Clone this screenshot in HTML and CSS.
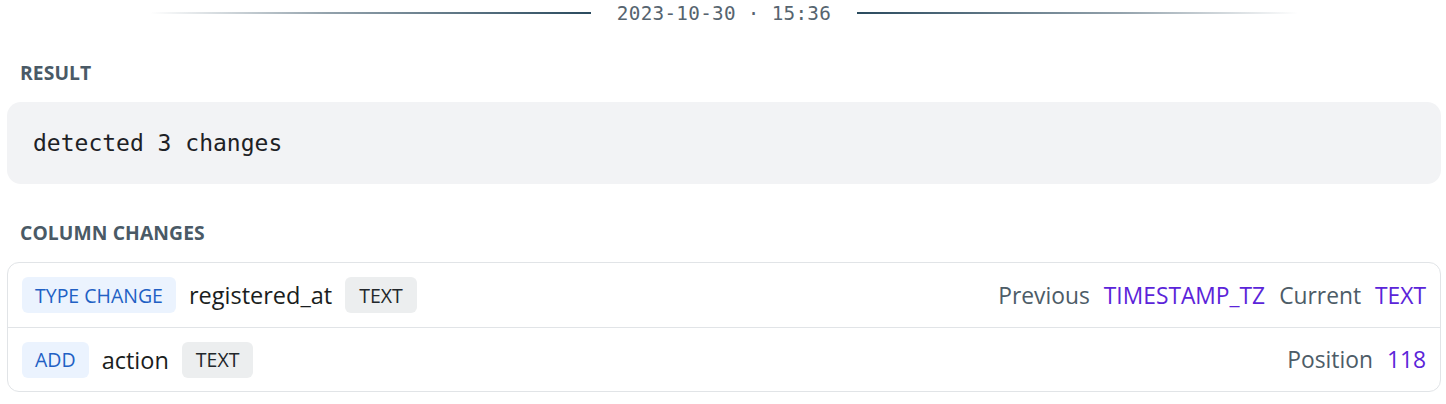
FILE: index.html
```html
<!DOCTYPE html>
<html>
<head>
<meta charset="utf-8">
<link rel="stylesheet" href="styles.css">
</head>
<body>
<div class="page">
  <div class="stamp">
    <span class="rule rule-left"></span>
    <span class="stamp-text">2023-10-30 · 15:36</span>
    <span class="rule rule-right"></span>
  </div>
  <div class="section-label result-label">RESULT</div>
  <div class="result-box">detected 3 changes</div>
  <div class="section-label changes-label">COLUMN CHANGES</div>
  <div class="changes">
    <div class="change-row">
      <span class="badge badge-kind">TYPE CHANGE</span>
      <span class="col-name">registered_at</span>
      <span class="badge badge-type">TEXT</span>
      <span class="meta">
        <span class="meta-key">Previous</span>
        <span class="meta-val">TIMESTAMP_TZ</span>
        <span class="meta-key">Current</span>
        <span class="meta-val">TEXT</span>
      </span>
    </div>
    <div class="change-row">
      <span class="badge badge-kind">ADD</span>
      <span class="col-name">action</span>
      <span class="badge badge-type">TEXT</span>
      <span class="meta">
        <span class="meta-key">Position</span>
        <span class="meta-val">118</span>
      </span>
    </div>
  </div>
</div>
</body>
</html>
```
FILE: styles.css
```css
* { box-sizing: border-box; }
html, body { margin: 0; padding: 0; background: #ffffff; }
body { font-family: "Open Sans", "Noto Sans", sans-serif; color: #1b1f23; }

.page { padding: 0 5px 0 7px; }

.stamp {
  display: flex;
  align-items: center;
  justify-content: center;
  gap: 26px;
  height: 26px;
  padding: 0 143px;
}
.rule { flex: 1; height: 2px; }
.rule-left { background: linear-gradient(to right, rgba(40,70,90,0) 0%, rgba(40,70,90,0.5) 40%, #2a4a5e 100%); }
.rule-right { background: linear-gradient(to left, rgba(40,70,90,0) 0%, rgba(40,70,90,0.5) 40%, #2a4a5e 100%); }
.stamp-text {
  font-family: "DejaVu Sans Mono", monospace;
  font-size: 19.3px;
  color: #56646f;
  letter-spacing: 0.3px;
}

.section-label {
  font-size: 19.3px;
  font-weight: 700;
  color: #4a5a66;
  padding-left: 13px;
  letter-spacing: 0.1px;
}
.result-label { margin-top: 34px; line-height: 26px; }
.changes-label { margin-top: 36px; line-height: 26px; }

.result-box {
  margin-top: 16px;
  background: #f2f3f5;
  border-radius: 14px;
  height: 82px;
  padding: 0 26px;
  display: flex;
  align-items: center;
  font-family: "DejaVu Sans Mono", monospace;
  font-size: 23px;
  color: #1d2125;
}

.changes {
  margin-top: 16px;
  border: 1px solid #e1e4e7;
  border-radius: 12px;
}
.change-row {
  display: flex;
  align-items: center;
  height: 64px;
  padding: 0 14px 0 14px;
}
.change-row + .change-row { border-top: 1px solid #e1e4e7; }

.badge {
  display: inline-flex;
  align-items: center;
  height: 36px;
  padding: 0 13px;
  border-radius: 6px;
  font-size: 19.5px;
}
.badge-kind { background: #ebf3fe; color: #2160c4; }
.badge-type { background: #eceeef; color: #22272b; padding: 0 14px; }

.col-name {
  font-size: 23.5px;
  color: #1a1d20;
  margin: 0 13px;
}

.meta {
  margin-left: auto;
  display: flex;
  gap: 14px;
  font-size: 22.8px;
}
.meta-key { color: #4d5c67; }
.meta-val { color: #5b24d9; }
```
